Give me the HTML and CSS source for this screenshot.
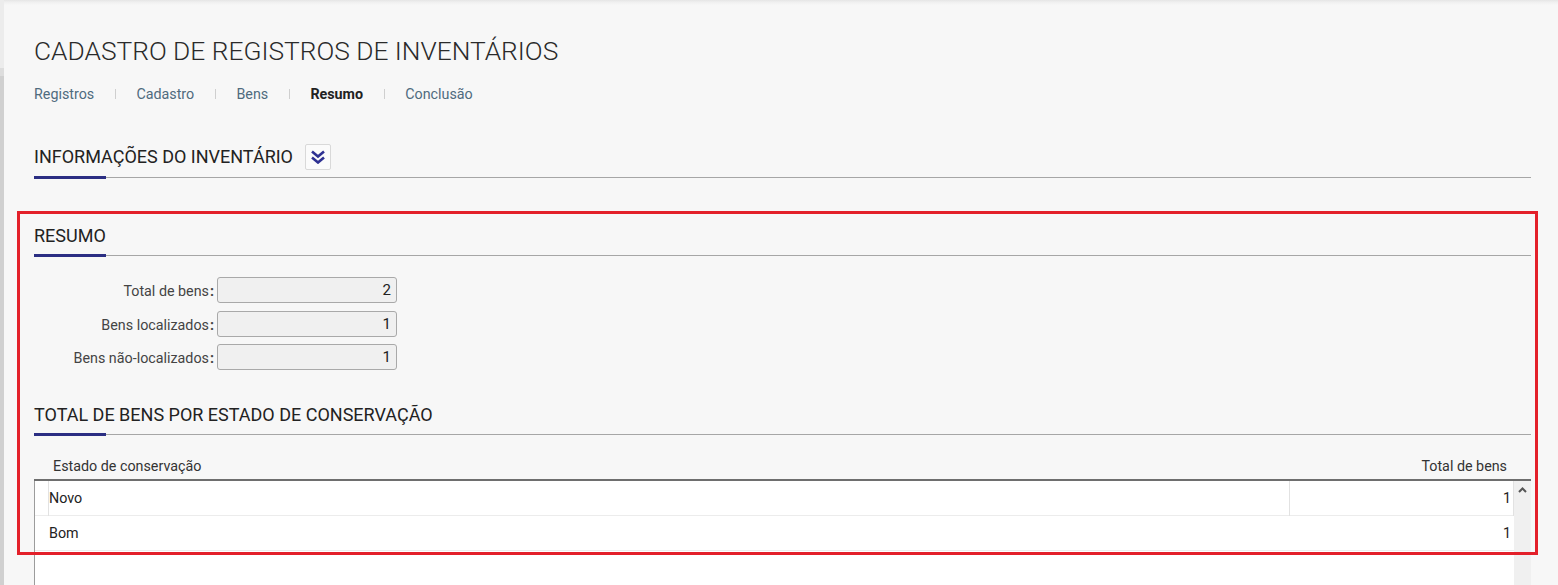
FILE: index.html
```html
<!DOCTYPE html>
<html lang="pt-BR">
<head>
<meta charset="utf-8">
<title>Cadastro de Registros de Inventários</title>
<link rel="stylesheet" href="styles.css">
</head>
<body>
<div class="app">
  <aside class="rail">
    <div class="rail-top"></div>
    <div class="rail-mid"></div>
    <div class="rail-bottom"></div>
  </aside>
  <main class="page">
    <h1 class="title">CADASTRO DE REGISTROS DE INVENTÁRIOS</h1>
    <nav class="steps">
      <a class="step">Registros</a>
      <span class="sep"></span>
      <a class="step">Cadastro</a>
      <span class="sep"></span>
      <a class="step">Bens</a>
      <span class="sep"></span>
      <a class="step step-current">Resumo</a>
      <span class="sep"></span>
      <a class="step">Conclusão</a>
    </nav>

    <header class="section-head section-head-toggle">
      <h2 class="section-title">INFORMAÇÕES DO INVENTÁRIO</h2>
      <button class="toggle" type="button" aria-label="Expandir">
        <svg width="16" height="14" viewBox="0 0 16 14">
          <path d="M2 1.5 L8 6.5 L14 1.5" fill="none" stroke="#2e3192" stroke-width="2.6" stroke-linejoin="miter"/>
          <path d="M2 7.5 L8 12.5 L14 7.5" fill="none" stroke="#2e3192" stroke-width="2.6" stroke-linejoin="miter"/>
        </svg>
      </button>
    </header>

    <section class="resumo">
      <header class="section-head">
        <h2 class="section-title">RESUMO</h2>
      </header>

      <div class="form">
        <label class="field-label">Total de bens<span class="colon">:</span></label>
        <div class="field-value">2</div>
        <label class="field-label">Bens localizados<span class="colon">:</span></label>
        <div class="field-value">1</div>
        <label class="field-label">Bens não-localizados<span class="colon">:</span></label>
        <div class="field-value">1</div>
      </div>

      <header class="section-head section-head-table">
        <h2 class="section-title">TOTAL DE BENS POR ESTADO DE CONSERVAÇÃO</h2>
      </header>

      <div class="grid">
        <div class="grid-head">
          <span>Estado de conservação</span>
          <span>Total de bens</span>
        </div>
        <div class="grid-body">
          <div class="grid-rows">
            <div class="row row-active">
              <div class="cell cell-lead"></div>
              <div class="cell cell-name">Novo</div>
              <div class="cell cell-num">1</div>
            </div>
            <div class="row">
              <div class="cell cell-lead"></div>
              <div class="cell cell-name">Bom</div>
              <div class="cell cell-num">1</div>
            </div>
          </div>
          <div class="scrollbar">
            <svg class="caret" width="9" height="6" viewBox="0 0 9 6">
              <path d="M1 5 L4.5 1.5 L8 5" fill="none" stroke="#555" stroke-width="2"/>
            </svg>
          </div>
        </div>
      </div>
    </section>
  </main>
  <div class="highlight"></div>
</div>
</body>
</html>
```

FILE: styles.css
```css
* { box-sizing: border-box; }

html, body {
  margin: 0;
  padding: 0;
  height: 585px;
  overflow: hidden;
  background: #f7f7f7;
  font-family: Roboto, "Liberation Sans", Arial, sans-serif;
  color: #333;
}

.app {
  position: relative;
  display: flex;
  height: 585px;
  overflow: hidden;
}

.rail {
  width: 4px;
  flex: 0 0 4px;
  display: flex;
  flex-direction: column;
}
.rail-top { height: 68px; background: #ececec; }
.rail-mid { height: 8px; background: #dddddd; }
.rail-bottom { flex: 1; background: #d0d0d0; }

.page {
  flex: 1;
  padding: 35px 27px 0 30px;
  background: linear-gradient(#e5e5e5 0, #efefef 2px, #f7f7f7 5px);
}

.title {
  margin: 0;
  font-size: 26.3px;
  line-height: 32px;
  font-weight: 300;
  color: #2a2a2a;
}

.steps {
  margin-top: 17px;
  display: flex;
  align-items: center;
  gap: 20.6px;
  height: 20px;
  font-size: 14.3px;
  line-height: 20px;
}
.step { color: #4f6b7e; }
.step-current { color: #222; font-weight: 700; }
.sep {
  width: 1px;
  height: 10px;
  background: #cfcfcf;
}

.section-head {
  position: relative;
  display: flex;
  align-items: center;
  gap: 12px;
  height: 33px;
  padding-bottom: 6px;
  border-bottom: 1px solid #a6a6a6;
}
.section-head::after {
  content: "";
  position: absolute;
  left: 0;
  bottom: -2px;
  width: 72px;
  height: 3px;
  background: #2b2e83;
}
.section-head-toggle {
  margin-top: 40px;
  height: 34px;
  padding-bottom: 7px;
}
.section-title {
  margin: 0;
  font-size: 18px;
  line-height: 26px;
  font-weight: 400;
  color: #222;
}

.toggle {
  width: 26px;
  height: 26px;
  padding: 0;
  display: flex;
  align-items: center;
  justify-content: center;
  background: #fbfbfb;
  border: 1px solid #d9d9d9;
  border-radius: 2px;
}

.resumo { margin-top: 45px; }

.form {
  margin-top: 21px;
  display: grid;
  grid-template-columns: 180px 180px;
  column-gap: 3px;
  row-gap: 7.5px;
  align-items: center;
}
.field-label {
  text-align: right;
  font-size: 14.3px;
  color: #444;
  padding-top: 2px;
}
.colon { font-weight: 700; margin-left: 1px; }
.field-value {
  height: 26px;
  line-height: 24px;
  padding-right: 5px;
  text-align: right;
  font-size: 15px;
  color: #222;
  background: #f0f0f0;
  border: 1px solid #a9a9a9;
  border-radius: 3px;
}

.section-head-table { margin-top: 32px; }

.grid { margin-top: 20px; }
.grid-head {
  display: flex;
  justify-content: space-between;
  height: 26px;
  padding: 0 24px 2px 19px;
  line-height: 23px;
  font-size: 14.3px;
  color: #333;
  border-bottom: 2px solid #6e6e6e;
}
.grid-body {
  display: flex;
  height: 200px;
  background: #fff;
  border-left: 1px solid #9c9c9c;
}
.grid-rows { flex: 1; }
.row {
  display: grid;
  grid-template-columns: 14px 1fr 224px;
  height: 35px;
  border-bottom: 1px solid #ececec;
  font-size: 14.3px;
  color: #222;
  line-height: 35px;
}
.cell-num { text-align: right; padding-right: 3px; }
.row-active .cell-lead { border-right: 1px solid #e2e2e2; }
.row-active .cell-name { border-right: 1px solid #e2e2e2; }
.row-active .cell-num { border-right: 1px solid #e2e2e2; padding-right: 2px; }

.scrollbar {
  width: 17px;
  flex: 0 0 17px;
  background: #f0f0f0;
  display: flex;
  justify-content: center;
  padding-top: 6px;
}
.caret { display: block; }

.highlight {
  position: absolute;
  left: 17px;
  top: 211px;
  width: 1521px;
  height: 344px;
  border: 3px solid #e3202a;
  pointer-events: none;
}
```
